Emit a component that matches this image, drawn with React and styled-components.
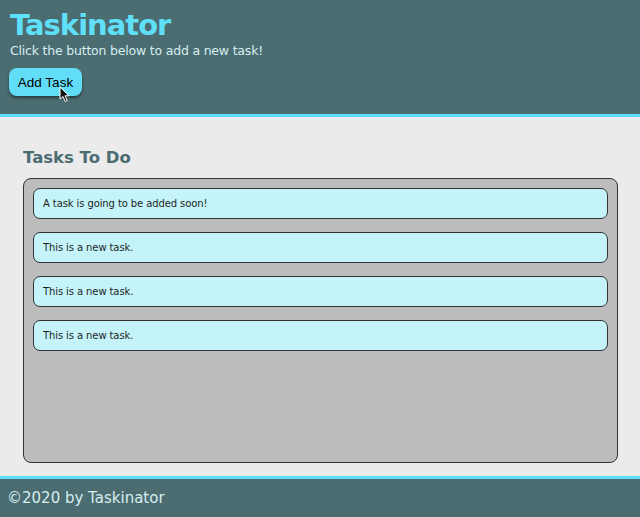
import React from 'react';
import styled, { createGlobalStyle } from 'styled-components';

const GlobalStyle = createGlobalStyle`
  html, body {
    margin: 0;
    padding: 0;
    background: #ebebeb;
    font-family: "DejaVu Sans", Verdana, sans-serif;
  }
`;

const tasks = [
  'A task is going to be added soon!',
  'This is a new task.',
  'This is a new task.',
  'This is a new task.',
];

const Cursor = () => (
  <CursorIcon width="12" height="17" viewBox="0 0 12 17">
    <path
      d="M1 1 L1 13 L4 10.5 L6.2 15.5 L8.2 14.6 L6 9.8 L10 9.8 Z"
      fill="#111"
      stroke="#fff"
      strokeWidth="1"
      strokeLinejoin="round"
    />
  </CursorIcon>
);

const App = () => {
  return (
    <Page>
      <GlobalStyle />
      <Header>
        <Title>Taskinator</Title>
        <Subtitle>Click the button below to add a new task!</Subtitle>
        <ButtonWrap>
          <AddButton>Add Task</AddButton>
          <Cursor />
        </ButtonWrap>
      </Header>
      <Main>
        <SectionTitle>Tasks To Do</SectionTitle>
        <TaskList>
          {tasks.map((t, i) => (
            <TaskItem key={i}>{t}</TaskItem>
          ))}
        </TaskList>
      </Main>
      <Footer>©2020 by Taskinator</Footer>
    </Page>
  );
};

const Page = styled.div`
  display: flex;
  flex-direction: column;
  min-height: 517px;
`;

const Header = styled.header`
  background: #4b6c71;
  border-bottom: 3px solid #5ddcf5;
  padding: 8px 10px 0;
  height: 106px;
`;

const Title = styled.h1`
  margin: 0;
  color: #5fe0f8;
  font-size: 29px;
  font-weight: bold;
  line-height: 34px;
  letter-spacing: -1px;
`;

const Subtitle = styled.p`
  margin: 0;
  color: #d6eef0;
  font-size: 12.5px;
  line-height: 18px;
  letter-spacing: -0.2px;
`;

const ButtonWrap = styled.div`
  position: relative;
  display: inline-block;
  margin-top: 8px;
  margin-left: -1px;
`;

const AddButton = styled.button`
  background: #62ddf7;
  color: #000;
  border: none;
  border-radius: 8px;
  box-shadow: 0 2px 3px rgba(0, 0, 0, 0.45);
  font: 13.5px "Liberation Sans", Arial, sans-serif;
  height: 28px;
  width: 73px;
  padding: 0;
  cursor: pointer;
`;

const CursorIcon = styled.svg`
  position: absolute;
  left: 50px;
  top: 18px;
`;

const Main = styled.main`
  flex: 1;
  background: #ebebeb;
  padding: 30px 22px 13px 23px;
`;

const SectionTitle = styled.h2`
  margin: 0 0 9px;
  color: #4b6c71;
  font-size: 16.5px;
  font-weight: bold;
  line-height: 22px;
`;

const TaskList = styled.ul`
  list-style: none;
  margin: 0;
  padding: 9px 9px;
  height: 265px;
  background: #bcbcbc;
  border: 1px solid #333;
  border-radius: 8px;
  display: flex;
  flex-direction: column;
  gap: 13px;
`;

const TaskItem = styled.li`
  background: #c4f4f9;
  border: 1px solid #333;
  border-radius: 7px;
  height: 29px;
  padding: 0 9px;
  display: flex;
  align-items: center;
  font-size: 10px;
  letter-spacing: -0.1px;
  color: #1e1e1e;
`;

const Footer = styled.footer`
  background: #4b6c71;
  border-top: 3px solid #5ddcf5;
  color: #d6eef0;
  font-size: 15px;
  height: 38px;
  padding: 0 7px;
  display: flex;
  align-items: center;
`;

export default App;
